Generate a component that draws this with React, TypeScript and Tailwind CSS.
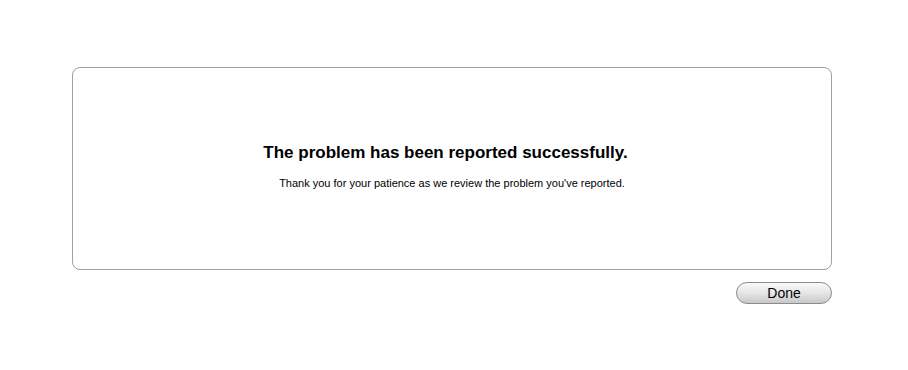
export default function App() {
  return (
    <div className="w-[908px] h-[370px] bg-white pt-[67px] pl-[72px]" style={{ fontFamily: '"Liberation Sans", Arial, sans-serif' }}>
      <div className="w-[760px]">
        <div className="h-[203px] rounded-[8px] border border-[#a0a0a0] flex flex-col items-center pt-[75px]">
          <h1 className="mr-[13px] text-[17px] leading-[20px] font-bold text-black">The problem has been reported successfully.</h1>
          <p className="mt-[14px] text-[11px] leading-[13px] text-black">Thank you for your patience as we review the problem you've reported.</p>
        </div>
        <div className="flex justify-end mt-[12px]">
          <button className="w-[96px] h-[22px] rounded-full border border-[#8c8c8c] bg-gradient-to-b from-[#f8f8f8] via-[#e6e6e6] to-[#c8c8c8] text-[14px] leading-none text-black">
            Done
          </button>
        </div>
      </div>
    </div>
  )
}
